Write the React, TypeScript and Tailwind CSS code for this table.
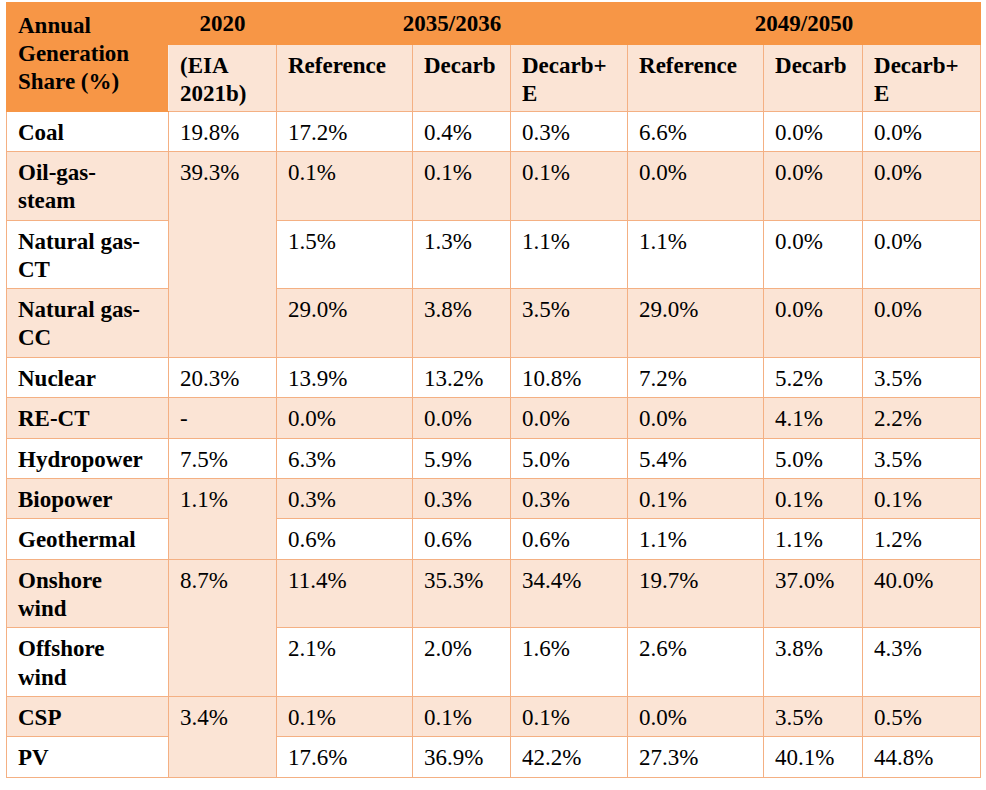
import React from "react";

type Row = {
  label: React.ReactNode;
  light: boolean;
  base?: { v: string; span?: number };
  vals: string[];
};

const rows: Row[] = [
  { label: "Coal", light: false, base: { v: "19.8%" }, vals: ["17.2%", "0.4%", "0.3%", "6.6%", "0.0%", "0.0%"] },
  { label: <>Oil-gas-<br />steam</>, light: true, base: { v: "39.3%", span: 3 }, vals: ["0.1%", "0.1%", "0.1%", "0.0%", "0.0%", "0.0%"] },
  { label: <>Natural gas-<br />CT</>, light: false, vals: ["1.5%", "1.3%", "1.1%", "1.1%", "0.0%", "0.0%"] },
  { label: <>Natural gas-<br />CC</>, light: true, vals: ["29.0%", "3.8%", "3.5%", "29.0%", "0.0%", "0.0%"] },
  { label: "Nuclear", light: false, base: { v: "20.3%" }, vals: ["13.9%", "13.2%", "10.8%", "7.2%", "5.2%", "3.5%"] },
  { label: "RE-CT", light: true, base: { v: "-" }, vals: ["0.0%", "0.0%", "0.0%", "0.0%", "4.1%", "2.2%"] },
  { label: "Hydropower", light: false, base: { v: "7.5%" }, vals: ["6.3%", "5.9%", "5.0%", "5.4%", "5.0%", "3.5%"] },
  { label: "Biopower", light: true, base: { v: "1.1%", span: 2 }, vals: ["0.3%", "0.3%", "0.3%", "0.1%", "0.1%", "0.1%"] },
  { label: "Geothermal", light: false, vals: ["0.6%", "0.6%", "0.6%", "1.1%", "1.1%", "1.2%"] },
  { label: <>Onshore<br />wind</>, light: true, base: { v: "8.7%", span: 2 }, vals: ["11.4%", "35.3%", "34.4%", "19.7%", "37.0%", "40.0%"] },
  { label: <>Offshore<br />wind</>, light: false, vals: ["2.1%", "2.0%", "1.6%", "2.6%", "3.8%", "4.3%"] },
  { label: "CSP", light: true, base: { v: "3.4%", span: 2 }, vals: ["0.1%", "0.1%", "0.1%", "0.0%", "3.5%", "0.5%"] },
  { label: "PV", light: false, vals: ["17.6%", "36.9%", "42.2%", "27.3%", "40.1%", "44.8%"] },
];

const widths = [162, 108, 136, 98, 117, 136, 99, 118];

const cell = "border border-[#F4B083] align-top pl-[11px] pr-[8px] pt-[7px] pb-[4.2px]";

export default function App() {
  return (
    <div className="bg-white min-h-[790px] pt-[2px] pl-[6px] font-['Liberation_Serif','Times_New_Roman',serif]">
      <table className="table-fixed border-collapse text-[23px] leading-[28.2px] text-black w-[974px]">
        <colgroup>
          {widths.map((w, i) => (
            <col key={i} style={{ width: w }} />
          ))}
        </colgroup>
        <thead>
          <tr className="font-bold">
            <th rowSpan={2} className="bg-[#F79646] border border-[#F79646] border-r-0 align-top text-left pl-[11px] pr-[8px] pt-[9px]">
              Annual Generation Share (%)
            </th>
            <th className="bg-[#F79646] border border-[#F79646] text-center pt-[7px] pb-[6px]">2020</th>
            <th colSpan={3} className="bg-[#F79646] border border-[#F79646] text-center pt-[7px] pb-[6px]">2035/2036</th>
            <th colSpan={3} className="bg-[#F79646] border border-[#F79646] text-center pt-[7px] pb-[6px]">2049/2050</th>
          </tr>
          <tr className="font-bold text-left">
            <th className="bg-[#FBE4D5] border border-[#F4B083] border-l-[#FBEDE3] align-top pl-[11px] pr-[8px] pt-[7px] pb-[2px]">
              (EIA<br />2021b)
            </th>
            {["Reference", "Decarb", "Decarb+|E", "Reference", "Decarb", "Decarb+|E"].map((h, i) => (
              <th key={i} className="bg-[#FBE4D5] border border-[#F4B083] align-top pl-[11px] pr-[8px] pt-[7px] pb-[2px]">
                {h.includes("|") ? (
                  <>
                    {h.split("|")[0]}
                    <br />
                    {h.split("|")[1]}
                  </>
                ) : (
                  h
                )}
              </th>
            ))}
          </tr>
        </thead>
        <tbody>
          {rows.map((r, i) => {
            const bg = r.light ? "bg-[#FBE4D5]" : "bg-white";
            return (
              <tr key={i}>
                <td className={`${cell} ${bg} font-bold`}>{r.label}</td>
                {r.base && (
                  <td rowSpan={r.base.span ?? 1} className={`${cell} ${r.base.span ? "bg-[#FBE4D5]" : bg}`}>
                    {r.base.v}
                  </td>
                )}
                {r.vals.map((v, j) => (
                  <td key={j} className={`${cell} ${bg}`}>
                    {v}
                  </td>
                ))}
              </tr>
            );
          })}
        </tbody>
      </table>
    </div>
  );
}
